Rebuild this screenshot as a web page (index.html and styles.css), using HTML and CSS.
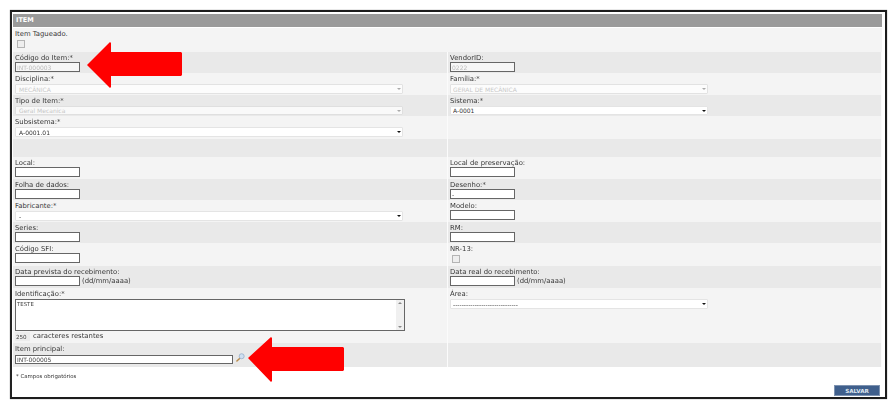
FILE: index.html
```html
<!DOCTYPE html>
<html lang="pt">
<head>
<meta charset="utf-8">
<title>Item</title>
<link rel="stylesheet" href="styles.css">
</head>
<body>
<main class="frame">
  <h1 class="title">ITEM</h1>
  <form class="rows">
    <div class="cell light wide"><label>Item Tagueado.</label><input class="check" type="checkbox" disabled></div>
    <div class="cell dark"><label>Código do Item:*</label><input class="text off" value="INT-000003" disabled></div>
    <div class="cell dark"><label>VendorID:</label><input class="text off" value="0222" disabled></div>
    <div class="cell light"><label>Disciplina:*</label><span class="select off long"><select disabled><option>MECÂNICA</option></select></span></div>
    <div class="cell light"><label>Família:*</label><span class="select off short"><select disabled><option>GERAL DE MECÂNICA</option></select></span></div>
    <div class="cell dark"><label>Tipo de Item:*</label><span class="select off long"><select disabled><option>Geral Mecanica</option></select></span></div>
    <div class="cell dark"><label>Sistema:*</label><span class="select short"><select><option>A-0001</option></select></span></div>
    <div class="cell light"><label>Subsistema:*</label><span class="select long"><select><option>A-0001.01</option></select></span></div>
    <div class="cell light"></div>
    <div class="cell dark"></div>
    <div class="cell dark"></div>
    <div class="cell light"><label>Local:</label><input class="text"></div>
    <div class="cell light"><label>Local de preservação:</label><input class="text"></div>
    <div class="cell dark"><label>Folha de dados:</label><input class="text"></div>
    <div class="cell dark"><label>Desenho:*</label><input class="text" value="-"></div>
    <div class="cell light"><label>Fabricante:*</label><span class="select long"><select><option>-</option></select></span></div>
    <div class="cell light"><label>Modelo:</label><input class="text"></div>
    <div class="cell dark"><label>Series:</label><input class="text"></div>
    <div class="cell dark"><label>RM:</label><input class="text"></div>
    <div class="cell light"><label>Código SFI:</label><input class="text"></div>
    <div class="cell light"><label>NR-13:</label><input class="check" type="checkbox"></div>
    <div class="cell dark"><label>Data prevista do recebimento:</label><div class="inline"><input class="text"><span class="hint">(dd/mm/aaaa)</span></div></div>
    <div class="cell dark"><label>Data real do recebimento:</label><div class="inline"><input class="text"><span class="hint">(dd/mm/aaaa)</span></div></div>
    <div class="cell light">
      <label>Identificação:*</label>
      <div class="area"><textarea>TESTE</textarea><span class="scroll"><i class="up"></i><i class="down"></i></span></div>
      <div class="inline count"><input class="counter" value="250" disabled><span class="hint">caracteres restantes</span></div>
    </div>
    <div class="cell light"><label>Área:</label><span class="select short"><select><option>------------------------------</option></select></span></div>
    <div class="cell dark">
      <label>Item principal:</label>
      <div class="inline"><input class="text main" value="INT-000005">
        <svg class="lens" viewBox="0 0 10 10" aria-hidden="true"><path d="M1 9 4 6" stroke="#b98a4a" stroke-width="1.6" stroke-linecap="round"/><circle cx="6.3" cy="3.6" r="2.8" fill="#cfe0f2" stroke="#8fa9c6" stroke-width=".8"/></svg>
      </div>
    </div>
    <div class="cell dark"></div>
  </form>
  <footer class="foot">
    <p class="note">* Campos obrigatórios</p>
    <button class="save" type="button">SALVAR</button>
  </footer>
</main>
<svg class="arrow arrow-one" viewBox="-1 -1 97 48" aria-hidden="true"><path d="M0 23 23 0 24 1V10H94L95 11V33L94 34H24V45L23 46Z"/></svg>
<svg class="arrow arrow-two" viewBox="-1 -1 98 47" aria-hidden="true"><path d="M0 21 23 0 24 1V10H95L96 11V33L95 34H24V44L23 45Z"/></svg>
</body>
</html>
```
FILE: styles.css
```css
* { box-sizing: border-box; }

html, body { margin: 0; height: 405px; overflow: hidden; background: #fff; }

body {
  position: relative;
  font-family: "DejaVu Sans", Verdana, sans-serif;
  font-size: 6.85px;
  color: #383838;
}

.frame {
  display: flex;
  flex-direction: column;
  width: 877px;
  height: 389px;
  margin: 10px 0 0 10px;
  padding: 2px 3px 0 1px;
  border: 2px solid #1c1c1c;
  border-left-color: #222;
  box-shadow: 0 0 1px #777;
  opacity: .999;
  filter: blur(.4px);
}

.title {
  margin: 0 0 1px;
  height: 13px;
  padding-left: 3px;
  background: #9a9a9a;
  color: #fff;
  font-size: 6.5px;
  line-height: 13px;
  font-weight: 700;
}

.rows {
  display: grid;
  grid-template-columns: 435px 434px;
  grid-template-rows: 24px 21px 22px 21px 23px 18px 22px 21px 22px 21px 23px 22px 55px 24px;
  column-gap: 0;
}

.cell {
  padding: 2px 0 0 2px;
  border-right: 1px solid #fbfbfb;
  min-width: 0;
}
.light { background: #f4f4f4; }
.dark { background: #e9e9e9; }
.wide { grid-column: 1 / -1; border-right: 0; }

label { display: block; height: 8px; line-height: 8px; white-space: nowrap; }

.text {
  display: block;
  width: 65px;
  height: 10px;
  margin: 0;
  padding: 0 1px;
  border: 1px solid #666;
  background: #fff;
  font: 6px "DejaVu Sans", sans-serif;
  color: #444;
}
.text.off { color: #bbb; background: #f6f6f6; }
.text.main { width: 218px; height: 9px; margin-top: 2px; }

.check {
  display: block;
  width: 8px;
  height: 8px;
  margin: 2px 0 0 2px;
  appearance: none;
  background: #eee;
  border: 1px solid #b4b4b4;
}

.select { position: relative; display: block; height: 10px; margin-top: 1px; }
.dark .select { height: 9px; }
.select.long { width: 388px; }
.select.short { width: 258px; }
.select select {
  display: block;
  width: 100%;
  height: 100%;
  margin: 0;
  padding: 0 0 0 3px;
  appearance: none;
  border: 1px solid #e4e4e4;
  border-radius: 1px;
  background: #fff;
  font: 6px "DejaVu Sans", sans-serif;
  color: #333;
}
.select.short select { padding-left: 2px; }
.select::after {
  content: "";
  position: absolute;
  right: 2px;
  top: 4px;
  border: 2px solid transparent;
  border-top: 2.5px solid #111;
  border-bottom: 0;
}
.select.off select { color: #b5b5b5; border-color: #dadada; }
.select.off::after { border-top-color: #aaa; }

.inline { display: flex; align-items: center; gap: 2px; }
.hint { font-size: 6.85px; line-height: 9px; }

.area { position: relative; width: 390px; height: 32px; margin-top: 1px; }
.area textarea {
  display: block;
  width: 100%;
  height: 100%;
  margin: 0;
  padding: 1px;
  resize: none;
  overflow: hidden;
  border: 1px solid #666;
  background: #fff;
  font: 5.4px "DejaVu Sans", sans-serif;
  color: #444;
}
.scroll {
  position: absolute;
  top: 1px;
  right: 1px;
  bottom: 1px;
  width: 8px;
  background: #f0f0f0;
}
.scroll i { position: absolute; left: 2px; border: 2px solid transparent; }
.scroll .up { top: 2px; border-top: 0; border-bottom: 2px solid #888; }
.scroll .down { bottom: 2px; border-bottom: 0; border-top: 2px solid #888; }

.count { margin-top: 1px; gap: 3px; }
.counter {
  width: 15px;
  height: 9px;
  padding: 0 1px;
  border: 0;
  background: #ececec;
  font: 5.6px "DejaVu Sans", sans-serif;
  color: #444;
}

.lens { width: 9px; height: 9px; margin: -3px 0 0 1px; }

.foot { position: relative; flex: 1; }
.note { margin: 6px 0 0 3px; font-size: 5.4px; line-height: 7px; color: #333; }
.save {
  position: absolute;
  right: 2px;
  bottom: 1px;
  width: 46px;
  height: 11px;
  padding: 0;
  border: 1px solid #7d92b0;
  background: #3f5f8c;
  color: #dfe6ef;
  font: 700 5.6px "DejaVu Sans", sans-serif;
}

.arrow { position: absolute; fill: #f00; filter: blur(.3px); }
.arrow-one { left: 86px; top: 41px; width: 97px; height: 48px; }
.arrow-two { left: 247px; top: 336px; width: 98px; height: 47px; }
```
